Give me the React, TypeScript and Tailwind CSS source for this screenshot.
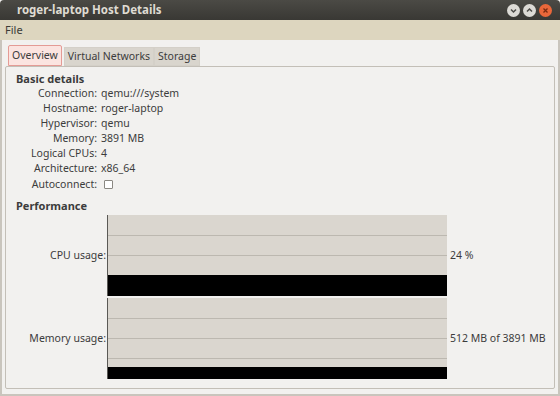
import React from "react";

// host details window, ubuntu ambiance style

const basic: [string, React.ReactNode][] = [
  ["Connection:", "qemu:///system"],
  ["Hostname:", "roger-laptop"],
  ["Hypervisor:", "qemu"],
  ["Memory:", "3891 MB"],
  ["Logical CPUs:", "4"],
  ["Architecture:", "x86_64"],
];

// chart drawing: grid lines every 20px, black usage bar at the bottom
const Graph = ({ bar }: { bar: number }) => (
  <svg width="340" height="81" viewBox="0 0 340 81" className="block">
    <rect x="0" y="0" width="340" height="81" fill="#dad6cf" />
    {[20, 40, 60].map((y) => (
      <line key={y} x1="0" x2="340" y1={y + 0.5} y2={y + 0.5} stroke="#bcb8b0" />
    ))}
    <rect x="0" y={81 - bar} width="340" height={bar} fill="#000" />
    <line x1="0.5" x2="0.5" y1="0" y2="81" stroke="#5a5955" />
  </svg>
);

const WinButton = ({ kind }: { kind: "min" | "max" | "close" }) => (
  <div
    className={
      kind === "close"
        ? "flex h-[13px] w-[13px] items-center justify-center rounded-full bg-[#e9673a]"
        : "flex h-[13px] w-[13px] items-center justify-center rounded-full bg-[#dcdad5]"
    }
  >
    <svg width="9" height="9" viewBox="0 0 9 9">
      {kind === "min" && <path d="M2 3.5 L4.5 6 L7 3.5" stroke="#4c4b47" strokeWidth="1.5" fill="none" />}
      {kind === "max" && <path d="M2 5.5 L4.5 3 L7 5.5" stroke="#4c4b47" strokeWidth="1.5" fill="none" />}
      {kind === "close" && <path d="M2.5 2.5 L6.5 6.5 M6.5 2.5 L2.5 6.5" stroke="#7a2a10" strokeWidth="1.3" fill="none" />}
    </svg>
  </div>
);

export default function App() {
  return (
    <div
      className="flex h-[396px] w-[560px] flex-col overflow-hidden bg-[#f2f1ef] text-[10.5px] text-[#3c3c3c]"
      style={{ fontFamily: '"Noto Sans", "DejaVu Sans", sans-serif' }}
    >
      {/* title bar */}
      <div className="flex h-[20px] shrink-0 items-center justify-between rounded-t-[4px] bg-gradient-to-b from-[#4b4a45] to-[#393834] pl-[17px] pr-[8px]">
        <span className="text-[11.5px] font-bold text-[#dfdbd2]">roger-laptop Host Details</span>
        <div className="flex items-center gap-[3px]">
          <WinButton kind="min" />
          <WinButton kind="max" />
          <WinButton kind="close" />
        </div>
      </div>

      {/* menu */}
      <div className="flex h-[20px] shrink-0 items-center bg-[#ddd6bf] px-[5px] text-[11px] text-[#3c3b37]">File</div>

      <div className="flex flex-1 flex-col border-x-2 border-b-2 border-[#c9c5bd] px-[3px] pb-[5px] pt-[5px]">
        {/* tabs */}
        <div className="flex items-end pl-[3px]">
          <div className="flex h-[21px] items-center rounded-t-[2px] border border-[#e49b95] bg-[#fbe4e0] px-[3px] text-[#3c3c3c]">
            Overview
          </div>
          <div className="ml-[2px] flex h-[19px] items-center border border-[#d4d0c8] bg-[#d9d5cd] px-[3px]">
            Virtual Networks
          </div>
          <div className="flex h-[19px] items-center border border-[#d4d0c8] bg-[#d9d5cd] px-[3px]">Storage</div>
        </div>

        {/* page */}
        <div className="flex flex-1 flex-col rounded-[2px] border border-[#c3bfb7] pl-[10px] pt-[4px]">
          <div className="text-[11px] leading-[15px] font-bold">Basic details</div>
          <div className="grid grid-cols-[81px_1fr] gap-x-[4px]">
            {basic.map(([k, v]) => (
              <React.Fragment key={k}>
                <div className="h-[15px] text-right leading-[15px]">{k}</div>
                <div className="h-[15px] leading-[15px]">{v}</div>
              </React.Fragment>
            ))}
            <div className="h-[17px] text-right leading-[17px]">Autoconnect:</div>
            <div className="flex h-[17px] items-center pl-[3px]">
              <div className="h-[9px] w-[9px] rounded-[1px] border border-[#8a8882] bg-white" />
            </div>
          </div>

          <div className="mt-[5px] text-[11px] leading-[15px] font-bold">Performance</div>
          <div className="mt-[2px] grid grid-cols-[91px_340px_1fr] items-center gap-y-[2px]">
            <div className="pr-[1px] text-right">CPU usage:</div>
            <Graph bar={21} />
            <div className="pl-[3px]">24 %</div>
            <div className="pr-[1px] text-right">Memory usage:</div>
            <Graph bar={12} />
            <div className="pl-[3px]">512 MB of 3891 MB</div>
          </div>
        </div>
      </div>
    </div>
  );
}
